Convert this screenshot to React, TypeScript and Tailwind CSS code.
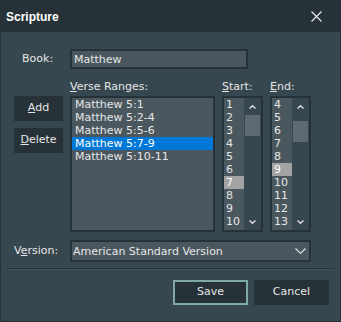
const verses = ['Matthew 5:1', 'Matthew 5:2-4', 'Matthew 5:5-6', 'Matthew 5:7-9', 'Matthew 5:10-11'];
const startNums = [1, 2, 3, 4, 5, 6, 7, 8, 9, 10];
const endNums = [4, 5, 6, 7, 8, 9, 10, 11, 12, 13];

function NumberList({ items, selected, thumbTop }: { items: number[]; selected: number; thumbTop: number }) {
  return (
    <div className="flex h-[136px] border-2 border-[#263238] bg-[#37474f]">
      <div className="w-[20px] bg-[#4a575e] pt-[0px]">
        {items.map(n => (
          <div
            key={n}
            className={`h-[13px] pl-[2px] leading-[13px] ${n === selected ? 'bg-[#a3a3a3] text-white' : ''}`}
          >
            {n}
          </div>
        ))}
      </div>
      <div className="flex w-[17px] flex-col">
        <div className="flex h-[17px] items-center justify-center">
          <svg width="7" height="4" viewBox="0 0 7 4">
            <path d="M0.5 3.5 L3.5 0.8 L6.5 3.5" fill="none" stroke="#e0e0e0" strokeWidth="1.4" />
          </svg>
        </div>
        <div className="relative flex-1">
          <div className="absolute left-[1px] h-[21px] w-[15px] bg-[#5d6a71]" style={{ top: thumbTop }} />
        </div>
        <div className="flex h-[17px] items-center justify-center">
          <svg width="7" height="4" viewBox="0 0 7 4">
            <path d="M0.5 0.5 L3.5 3.2 L6.5 0.5" fill="none" stroke="#e0e0e0" strokeWidth="1.4" />
          </svg>
        </div>
      </div>
    </div>
  );
}

export default function App() {
  return (
    <div className="flex h-[322px] w-[341px] flex-col border border-[#263238] bg-[#37474f] font-['DejaVu_Sans',sans-serif] text-[11px] text-[#e6e6e6]">
      <div className="flex h-[31px] shrink-0 items-center justify-between bg-[#263238] pl-[5px] pr-[18px]">
        <span className="font-['Liberation_Sans',sans-serif] text-[12px] font-bold text-white">Scripture</span>
        <svg width="11" height="11" viewBox="0 0 11 11">
          <path d="M0.5 0.5 L10.5 10.5 M10.5 0.5 L0.5 10.5" stroke="#f0f0f0" strokeWidth="1.1" />
        </svg>
      </div>

      <div className="pl-[13px] pt-[17px]">
        <div className="flex h-[20px] items-center">
          <span className="w-[56px] pl-[8px]">Book:</span>
          <div className="flex h-[20px] w-[178px] items-center border-2 border-[#263238] bg-[#4a575e] pl-[2px] leading-[13px]">
            Matthew
          </div>
        </div>

        <div className="mt-[11px] grid grid-cols-[49px_145px_41px_41px] gap-x-[7px]">
          <div />
          <div className="h-[16px] leading-[13px]"><u>V</u>erse Ranges:</div>
          <div className="h-[16px] leading-[13px]"><u>S</u>tart:</div>
          <div className="h-[16px] leading-[13px]"><u>E</u>nd:</div>

          <div className="flex flex-col gap-[7px]">
            <div className="flex h-[25px] items-center justify-center bg-[#263238]"><span><u>A</u>dd</span></div>
            <div className="flex h-[25px] items-center justify-center bg-[#263238]"><span><u>D</u>elete</span></div>
          </div>
          <div className="h-[136px] border-2 border-[#263238] bg-[#4a575e]">
            {verses.map((v, i) => (
              <div
                key={v}
                className={`h-[13px] pl-[3px] leading-[13px] ${i === 3 ? 'bg-[#0078d7] text-white' : ''}`}
              >
                {v}
              </div>
            ))}
          </div>
          <NumberList items={startNums} selected={7} thumbTop={0} />
          <NumberList items={endNums} selected={9} thumbTop={6} />
        </div>

        <div className="mt-[8px] flex h-[22px] items-center">
          <span className="w-[56px]">V<u>e</u>rsion:</span>
          <div className="flex h-[22px] w-[241px] items-center justify-between border-2 border-[#263238] bg-[#4a575e] pl-[1px] pr-[3px] leading-[13px]">
            <span>American Standard Version</span>
            <svg width="11" height="6" viewBox="0 0 11 6">
              <path d="M0.5 0.5 L5.5 5.3 L10.5 0.5" fill="none" stroke="#e6e6e6" strokeWidth="1.1" />
            </svg>
          </div>
        </div>

        <div className="-ml-[8px] mt-[6px] h-[2px] w-[329px] border-t border-[#263238] border-b border-b-[#44535a]" />

        <div className="mt-[10px] flex justify-end gap-[6px] pr-[11px]">
          <div className="flex h-[25px] w-[75px] items-center justify-center border-2 border-[#7fa9a3] bg-[#263238]">Save</div>
          <div className="flex h-[25px] w-[75px] items-center justify-center bg-[#263238]">Cancel</div>
        </div>
      </div>
    </div>
  );
}
